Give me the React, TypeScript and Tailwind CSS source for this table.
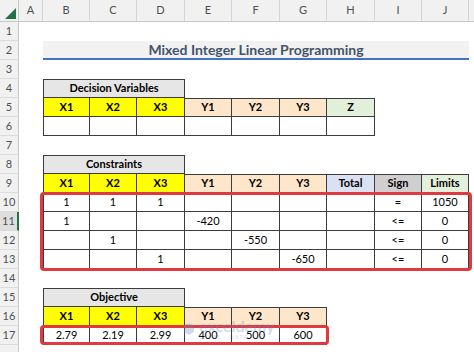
import clsx from "clsx";
import type { ReactNode } from "react";

const LETTERS = ["B", "C", "D", "E", "F", "G", "H", "I", "J"];
const W = ["w-[47px]", "w-[47px]", "w-[48px]", "w-[47px]", "w-[48px]", "w-[47px]", "w-[48px]", "w-[47px]", "w-[47px]"];

const YEL = "bg-[#ffff00]";
const PEACH = "bg-[#fde6c9]";
const GREEN = "bg-[#e2efda]";
const BLUE = "bg-[#d9e1f2]";
const SIGN = "bg-[#d0cece]";
const GRAY = "bg-[#e7e6e6]";

const CONSTRAINTS = [
  ["1", "1", "1", "", "", "", "", "=", "1050"],
  ["1", "", "", "-420", "", "", "", "<=", "0"],
  ["", "1", "", "", "-550", "", "", "<=", "0"],
  ["", "", "1", "", "", "-650", "", "<=", "0"],
];

const OBJECTIVE = ["2.79", "2.19", "2.99", "400", "500", "600"];

function Cell({
  w,
  bg = "bg-white",
  bold,
  top,
  left,
  children,
}: {
  w: string;
  bg?: string;
  bold?: boolean;
  top?: boolean;
  left?: boolean;
  children?: ReactNode;
}) {
  return (
    <div
      className={clsx(
        w,
        bg,
        "h-full flex items-center justify-center border-r border-b border-[#3c3c3c] text-[11px] text-black",
        top && "border-t",
        left && "border-l",
        bold && "font-bold"
      )}
    >
      {children}
    </div>
  );
}

function Row({ n, active, children }: { n?: number; active?: boolean; children?: ReactNode }) {
  return (
    <div className="flex h-[19px] shrink-0">
      <div
        className={clsx(
          "w-[19px] h-full flex items-center justify-center text-[11px] text-[#505050] border-b border-[#dcdcdc]",
          active ? "bg-[#dedede] border-r-2 border-r-[#217346]" : "bg-[#f1f1f1] border-r border-r-[#c8c8c8]"
        )}
      >
        {n}
      </div>
      <div className="w-[24px] h-full" />
      {children}
    </div>
  );
}

function Header({ labels, bgs, topFrom }: { labels: string[]; bgs: string[]; topFrom: number }) {
  return (
    <>
      {labels.map((l, i) => (
        <Cell key={i} w={W[i]} bg={bgs[i]} bold top={i >= topFrom} left={i === 0}>
          {l}
        </Cell>
      ))}
    </>
  );
}

export default function App() {
  return (
    <div
      className="relative w-[474px] h-[352px] overflow-hidden bg-white flex flex-col"
      style={{ fontFamily: "Lato, 'Liberation Sans', sans-serif" }}
    >
      {/* column headers */}
      <div className="flex h-[22px] shrink-0 bg-[#f1f1f1] border-b border-[#c8c8c8]">
        <div className="relative w-[19px] h-full border-r border-[#c8c8c8]">
          <svg width="11" height="11" viewBox="0 0 11 11" className="absolute right-[2px] bottom-[2px]">
            <polygon points="11,0 11,11 0,11" fill="#217346" />
          </svg>
        </div>
        <div className="w-[24px] h-full flex items-center justify-center text-[11px] text-[#505050] border-r border-[#d4d4d4]">
          A
        </div>
        {LETTERS.map((l, i) => (
          <div
            key={l}
            className={clsx(W[i], "h-full flex items-center justify-center text-[11px] text-[#505050] border-r border-[#d4d4d4]")}
          >
            {l}
          </div>
        ))}
        <div className="flex-1" />
      </div>

      <Row n={1} />
      <Row n={2}>
        <div className="w-[426px] h-full bg-[#f2f2f2] border-b-2 border-[#4472c4] flex items-center justify-center text-[14px] font-bold text-[#44546a]">
          Mixed Integer Linear Programming
        </div>
      </Row>
      <Row n={3} />

      {/* Decision variables */}
      <Row n={4}>
        <Cell w="w-[142px]" bg={GRAY} bold top left>
          Decision Variables
        </Cell>
      </Row>
      <Row n={5}>
        <Header
          labels={["X1", "X2", "X3", "Y1", "Y2", "Y3", "Z"]}
          bgs={[YEL, YEL, YEL, PEACH, PEACH, PEACH, GREEN]}
          topFrom={3}
        />
      </Row>
      <Row n={6}>
        {[0, 1, 2, 3, 4, 5, 6].map((i) => (
          <Cell key={i} w={W[i]} left={i === 0} />
        ))}
      </Row>
      <Row n={7} />

      {/* Constraints */}
      <Row n={8}>
        <Cell w="w-[142px]" bg={GRAY} bold top left>
          Constraints
        </Cell>
      </Row>
      <Row n={9}>
        <Header
          labels={["X1", "X2", "X3", "Y1", "Y2", "Y3", "Total", "Sign", "Limits"]}
          bgs={[YEL, YEL, YEL, PEACH, PEACH, PEACH, BLUE, SIGN, GREEN]}
          topFrom={3}
        />
      </Row>
      {CONSTRAINTS.map((r, ri) => (
        <Row key={ri} n={10 + ri} active={ri === 1}>
          {r.map((v, i) => (
            <Cell key={i} w={W[i]} left={i === 0}>
              {v}
            </Cell>
          ))}
        </Row>
      ))}
      <Row n={14} />

      {/* Objective */}
      <Row n={15}>
        <Cell w="w-[142px]" bg={GRAY} bold top left>
          Objective
        </Cell>
      </Row>
      <Row n={16}>
        <Header
          labels={["X1", "X2", "X3", "Y1", "Y2", "Y3"]}
          bgs={[YEL, YEL, YEL, PEACH, PEACH, PEACH]}
          topFrom={3}
        />
      </Row>
      <Row n={17}>
        {OBJECTIVE.map((v, i) => (
          <Cell key={i} w={W[i]} left={i === 0}>
            {v}
          </Cell>
        ))}
      </Row>
      <Row />

      {/* red highlight boxes */}
      <div className="absolute left-[40px] top-[192px] w-[432px] h-[79px] border-[3px] border-[#e03a40] rounded-[4px]" />
      <div className="absolute left-[40px] top-[325px] w-[289px] h-[20px] border-[3px] border-[#e03a40] rounded-[4px]" />

      {/* watermark */}
      <div className="absolute left-[182px] top-[318px] flex items-center gap-[3px] opacity-30 pointer-events-none">
        <svg width="14" height="14" viewBox="0 0 14 14">
          <path d="M2 3 L7 1 L12 3 L12 10 L7 13 L2 10 Z" fill="#6b86b8" />
        </svg>
        <div className="flex flex-col leading-none">
          <span className="text-[16px] font-bold text-[#6b86b8]">exceldemy</span>
          <span className="text-[6px] tracking-[1px] text-[#6b86b8]">EXCEL · DATA · BI</span>
        </div>
      </div>
    </div>
  );
}
